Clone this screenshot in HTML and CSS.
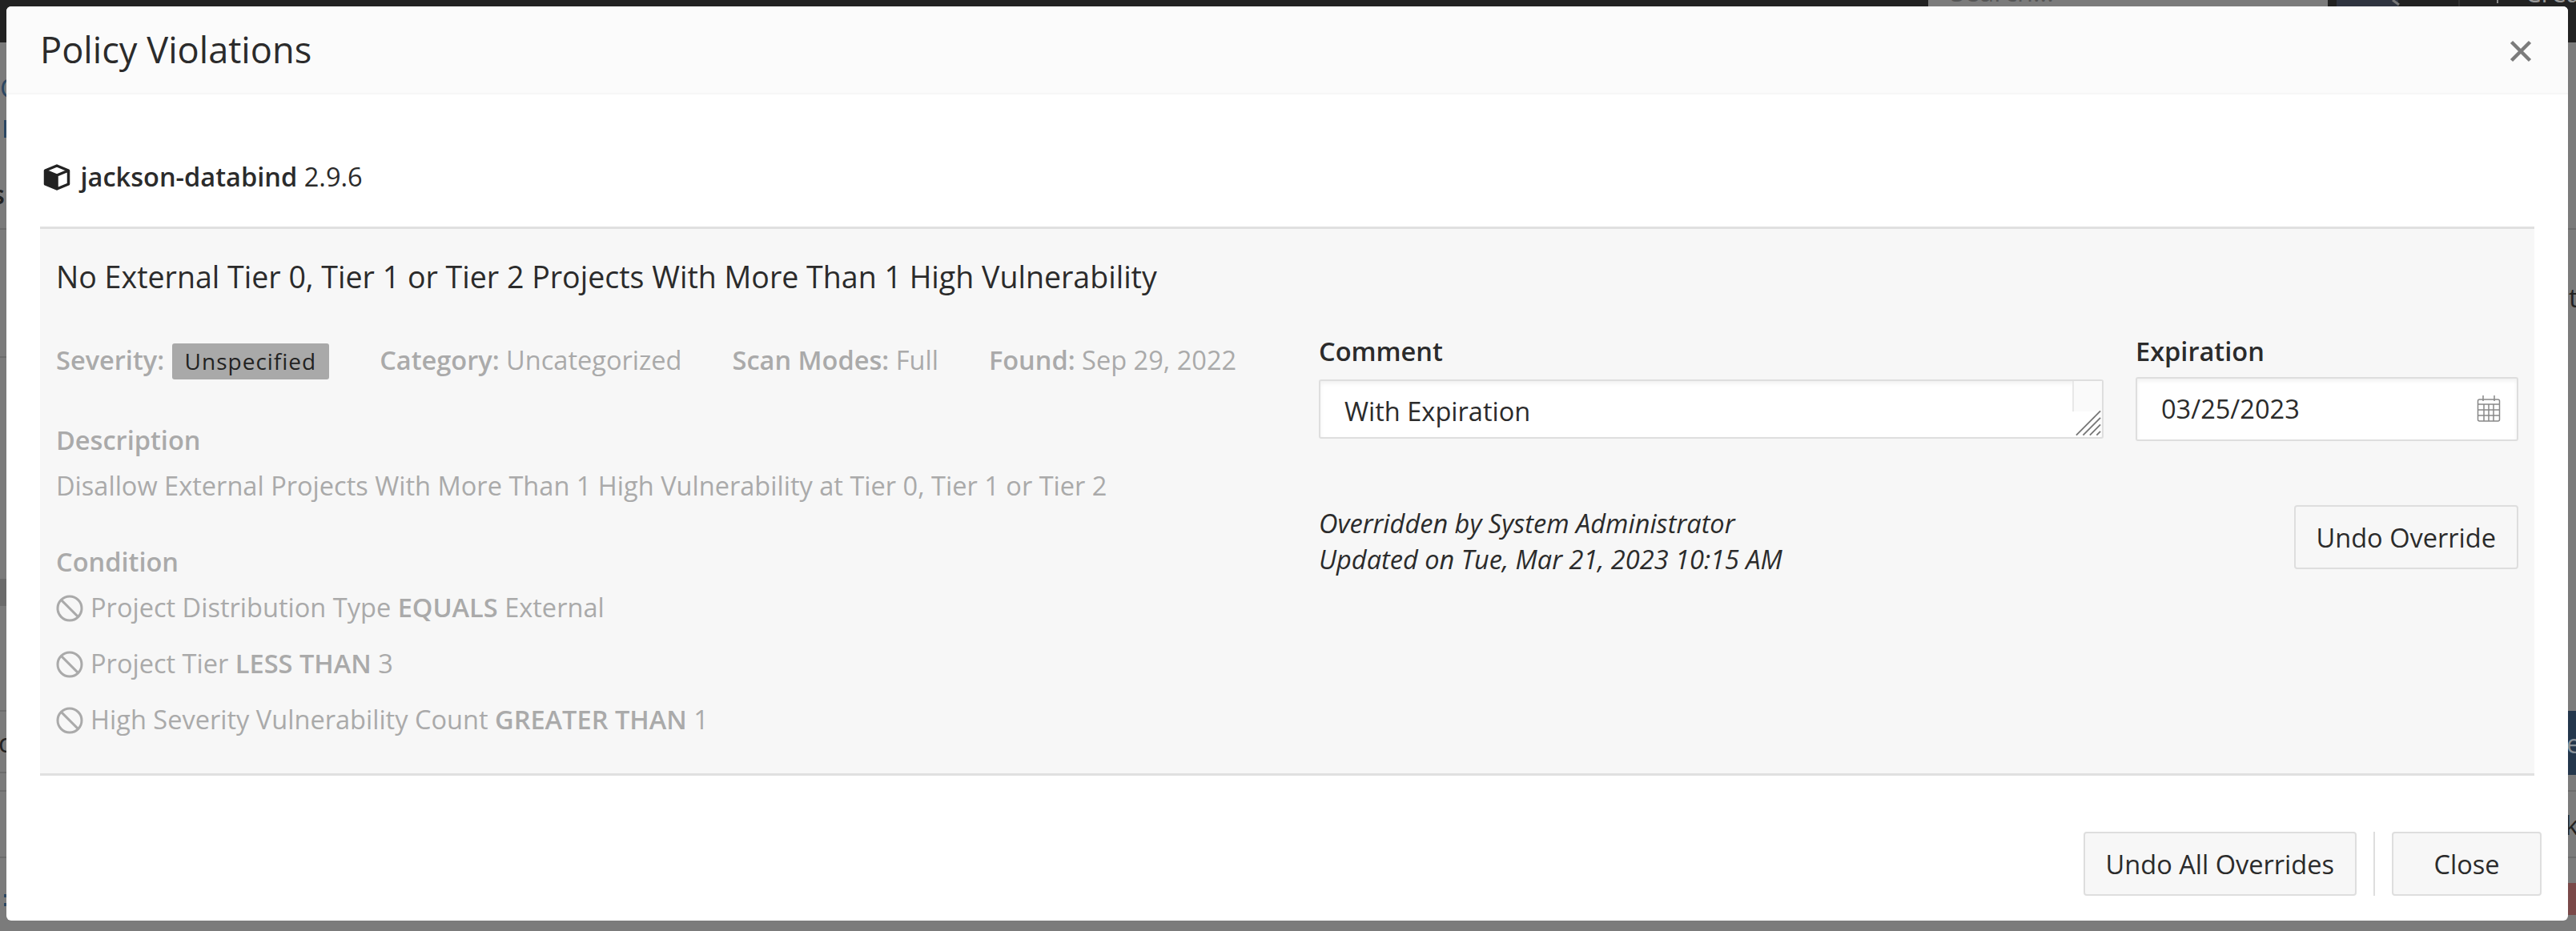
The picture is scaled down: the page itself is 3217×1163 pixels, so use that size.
FILE: index.html
```
<!DOCTYPE html>
<html lang="en">
<head>
    <meta charset="UTF-8">
    <title>Policy Violations</title>
    <link rel="stylesheet" href="styles.css">
</head>
<body>
    <!-- dimmed page behind the modal -->
    <svg class="backdrop" viewBox="0 0 3217 1163">
        <rect width="3217" height="1163" fill="#7b7b7b"/>
        <rect width="3217" height="53" fill="#222"/>
        <rect x="2408" width="499" height="20" fill="#7b7b7b"/>
        <text x="2436" y="2" fill="#555">Search...</text>
        <rect x="2918" width="77" height="20" fill="#2f3440"/>
        <path d="M2988 0 2996 6" stroke="#777" stroke-width="3"/>
        <path d="M3071 0V20" stroke="#333" stroke-width="2"/>
        <path d="M3119 0V4" stroke="#888" stroke-width="2"/>
        <text x="3153" y="3" fill="#999">Create</text>
        <path d="M0 286H3217M0 446H10M0 888H10M0 965H10M0 988H3217M0 1071H3217" stroke="#6c6c6c" stroke-width="2"/>
        <rect y="723" width="10" height="34" fill="#6b6b6b"/>
        <text x="0" y="122" fill="#2b4763">C</text>
        <rect x="5" y="150" width="4" height="22" fill="#2b4763"/>
        <text x="-10" y="255" fill="#222" font-weight="600">s</text>
        <text x="-2" y="940" fill="#222">c</text>
        <path d="M5 1117H9V1121H5ZM5 1128H9V1132H5Z" fill="#2b4763"/>
        <text x="3188" y="384" fill="#222">nt</text>
        <rect x="3200" y="888" width="17" height="80" fill="#24374c"/>
        <text x="3205" y="941" fill="#8a9299">e</text>
        <text x="3203" y="1043" fill="#222">k</text>
        <rect x="3200" y="1103" width="17" height="40" fill="#7a4949"/>
    </svg>

    <div class="modal">
        <div class="modal-header">
            <h1>Policy Violations</h1>
            <svg class="close-icon" viewBox="0 0 28 28"><path d="M2.5 2.5 25.500 25.500M25.500 2.500 2.500 25.500"/></svg>
        </div>

        <div class="modal-body">
            <div class="component">
                <svg class="cube-icon" viewBox="0 0 33 33"><path class="cube-fill" d="M1 7 17 13V32.500L1 25Z"/><path class="cube-line" d="M16.500 2 31 8V25L16.500 31 2 25V8ZM2 8 16.500 14 31 8M16.500 14V31"/></svg>
                <strong>jackson-databind</strong> 2.9.6
            </div>

            <div class="violation">
                <h2>No External Tier 0, Tier 1 or Tier 2 Projects With More Than 1 High Vulnerability</h2>
                <div class="columns">
                    <div class="details">
                        <div class="meta">
                            <div><strong>Severity:</strong> <span class="badge">Unspecified</span></div>
                            <div><strong>Category:</strong> Uncategorized</div>
                            <div><strong>Scan Modes:</strong> Full</div>
                            <div><strong>Found:</strong> Sep 29, 2022</div>
                        </div>
                        <h3>Description</h3>
                        <p>Disallow External Projects With More Than 1 High Vulnerability at Tier 0, Tier 1 or Tier 2</p>
                        <h3>Condition</h3>
                        <ul class="conditions">
                            <li><svg class="ban-icon" viewBox="0 0 34 34"><circle cx="17" cy="17" r="15"/><path d="M6.400 6.400 27.600 27.600"/></svg>Project Distribution Type <strong>EQUALS</strong> External</li>
                            <li><svg class="ban-icon" viewBox="0 0 34 34"><circle cx="17" cy="17" r="15"/><path d="M6.400 6.400 27.600 27.600"/></svg>Project Tier <strong>LESS THAN</strong> 3</li>
                            <li><svg class="ban-icon" viewBox="0 0 34 34"><circle cx="17" cy="17" r="15"/><path d="M6.400 6.400 27.600 27.600"/></svg>High Severity Vulnerability Count <strong>GREATER THAN</strong> 1</li>
                        </ul>
                    </div>

                    <div class="override">
                        <div class="fields">
                            <div class="field field-comment">
                                <label>Comment</label>
                                <div class="input comment-box">
                                    <span>With Expiration</span>
                                    <div class="scroll-corner">
                                        <svg class="grip" viewBox="0 0 34 34"><path d="M1 33 33 1M10 33 33 10M19 33 33 19M28 33 33 28"/></svg>
                                    </div>
                                </div>
                            </div>
                            <div class="field field-date">
                                <label>Expiration</label>
                                <div class="input date-box">
                                    <span>03/25/2023</span>
                                    <svg class="calendar-icon" viewBox="0 0 30 34"><rect x="1.500" y="5" width="27" height="27" rx="2"/><path d="M2 11H28M2 18H28M2 25H28M9 11V32M15 11V32M21 11V32M8 0V7M22 0V7"/></svg>
                                </div>
                            </div>
                        </div>
                        <div class="audit">
                            <em>Overridden by System Administrator<br>Updated on Tue, Mar 21, 2023 10:15 AM</em>
                            <button class="btn">Undo Override</button>
                        </div>
                    </div>
                </div>
            </div>
        </div>

        <div class="modal-footer">
            <button class="btn">Undo All Overrides</button>
            <span class="divider"></span>
            <button class="btn btn-close">Close</button>
        </div>
    </div>
</body>
</html>
```

FILE: styles.css
```
* {
    margin: 0;
    padding: 0;
    box-sizing: border-box;
}

body {
    position: relative;
    width: 3217px;
    height: 1163px;
    overflow: hidden;
    padding: 8px 10px 13px 8px;
    background: #7b7b7b;
    font-family: 'Open Sans', sans-serif;
    font-size: 32.55px;
    line-height: 45px;
    color: #2b2b2b;
}

strong,
h3,
label {
    font-weight: 600;
}

.backdrop {
    position: absolute;
    top: 0;
    left: 0;
    width: 3217px;
    height: 1163px;
}

.modal {
    position: relative;
    height: 1142px;
    background: #fff;
    border-radius: 6px;
    overflow: hidden;
    display: flex;
    flex-direction: column;
}

.modal-header {
    height: 110px;
    background: #fbfbfb;
    border-bottom: 2px solid #f7f7f7;
    padding: 0 45px 0 42px;
    display: flex;
    align-items: center;
    justify-content: space-between;
}

h1 {
    font-size: 45.2px;
    font-weight: 400;
    padding-bottom: 2px;
}

.close-icon {
    width: 28px;
    height: 28px;
    margin-top: 3px;
    stroke: #7b7b7b;
    stroke-width: 4.5;
}

.modal-body {
    padding: 0 42px;
}

.component {
    padding-top: 80px;
    height: 165px;
}

.cube-icon {
    width: 34px;
    height: 33px;
    margin: 0 4px -5px 4px;
}

.cube-fill {
    fill: #222;
}

.cube-line {
    fill: none;
    stroke: #222;
    stroke-width: 3.5;
    stroke-linejoin: round;
}

.violation {
    height: 686px;
    background: #f7f7f7;
    border-top: 3px solid #e0e0e0;
    border-bottom: 3px solid #e0e0e0;
    padding: 32px 20px;
}

h2 {
    font-size: 37.55px;
    font-weight: 400;
    line-height: 56px;
}

.columns {
    display: flex;
    justify-content: space-between;
}

.details {
    color: #aaa;
    padding-top: 53px;
}

.meta {
    display: flex;
    gap: 63px;
    margin-bottom: 53px;
}

.badge {
    display: inline-block;
    background: #a9a9a9;
    color: #222;
    border-radius: 3px;
    font-size: 28px;
    letter-spacing: 1px;
    padding: 0 16px;
    margin-left: 1px;
}

h3 {
    font-size: 32.55px;
}

.details p {
    margin: 12px 0 50px;
}

.conditions {
    list-style: none;
    padding-top: 12px;
    display: flex;
    flex-direction: column;
    gap: 25px;
}

.ban-icon {
    width: 34px;
    height: 34px;
    margin: 0 9px -6px 0;
    fill: none;
    stroke: #aaa;
    stroke-width: 3;
}

.override {
    width: 1498px;
    padding-top: 42px;
}

.fields {
    display: flex;
    justify-content: space-between;
}

.input {
    background: #fff;
    border: 2px solid #dedede;
    border-radius: 3px;
    box-shadow: inset 0 3px 5px rgba(0, 0, 0, 0.06);
    margin-top: 10px;
    display: flex;
    justify-content: space-between;
}

.field-comment {
    width: 980px;
}

.field-date {
    width: 478px;
}

label {
    display: block;
}

.comment-box {
    height: 74px;
    margin-top: 13px;
    padding-left: 30px;
    line-height: 75px;
}

.scroll-corner {
    width: 37px;
    height: 38px;
    background: #fafafa;
    border-left: 2px solid #e8e8e8;
}

.grip {
    display: block;
    width: 32px;
    height: 33px;
    margin: 36px 0 0 2px;
    fill: none;
    stroke: #777;
    stroke-width: 2;
}

.date-box {
    height: 80px;
    padding: 0 20px 0 30px;
    line-height: 76px;
}

.calendar-icon {
    width: 30px;
    height: 34px;
    margin-top: 21px;
    fill: none;
    stroke: #888;
    stroke-width: 1.5;
}

.audit {
    display: flex;
    justify-content: space-between;
    margin-top: 80px;
}

.btn {
    height: 80px;
    padding: 0 26px;
    background: #f7f7f7;
    border: 2px solid #dedede;
    border-radius: 4px;
    font: inherit;
    color: inherit;
}

.modal-footer {
    display: flex;
    justify-content: flex-end;
    gap: 21px;
    padding: 70px 33px 0 0;
}

.divider {
    width: 2px;
    height: 80px;
    background: #dedede;
}

.btn-close {
    width: 187px;
}
```
